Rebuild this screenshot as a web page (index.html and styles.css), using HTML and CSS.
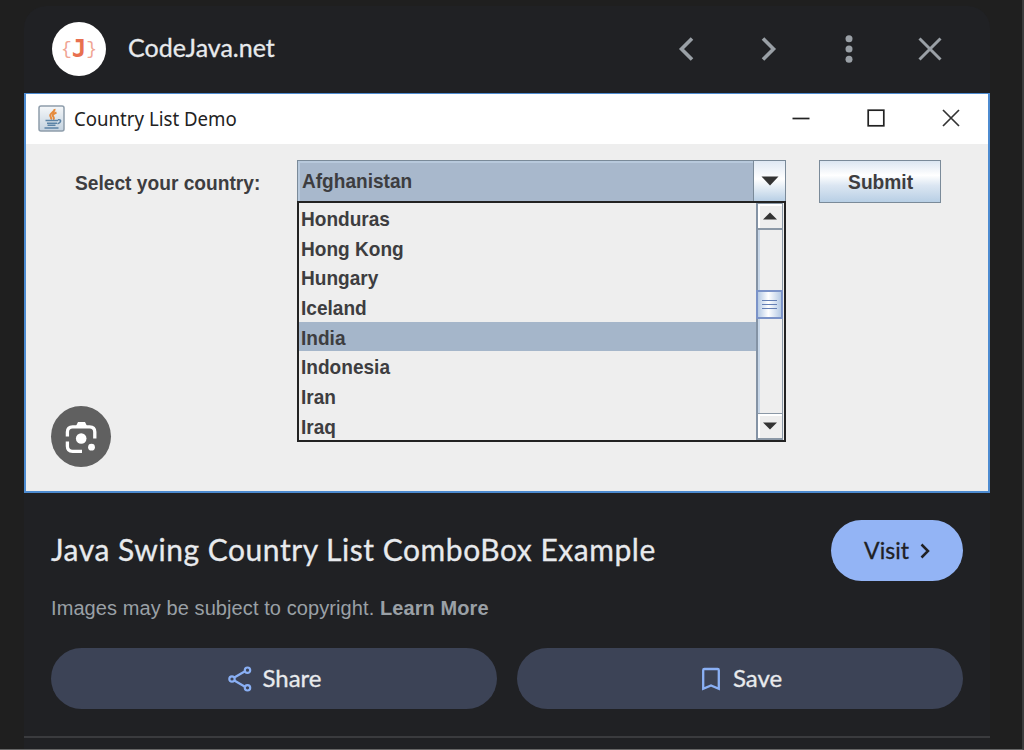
FILE: index.html
```html
<!DOCTYPE html>
<html lang="en">
<head>
<meta charset="utf-8">
<title>Java Swing Country List ComboBox Example</title>
<link rel="stylesheet" href="styles.css">
</head>
<body>
<main class="panel">
  <header class="panel-head">
    <span class="logo"><span class="brace">{</span><b>J</b><span class="brace">}</span></span>
    <span class="site"><span class="t-site">CodeJava.net</span></span>
    <nav class="actions">
      <svg width="28" height="28" viewBox="0 0 28 28"><path d="M19 3.500 8.500 14 19 24.500" fill="none" stroke="#9aa0a6" stroke-width="3.600"/></svg>
      <svg width="28" height="28" viewBox="0 0 28 28"><path d="M9 3.500 19.500 14 9 24.500" fill="none" stroke="#9aa0a6" stroke-width="3.600"/></svg>
      <svg width="28" height="28" viewBox="0 0 28 28" fill="#9aa0a6"><circle cx="14" cy="3.800" r="3.500"/><circle cx="14" cy="14" r="3.500"/><circle cx="14" cy="24.200" r="3.500"/></svg>
      <svg width="28" height="28" viewBox="0 0 28 28"><path d="M3.500 3.500 24.500 24.500M24.500 3.500 3.500 24.500" fill="none" stroke="#9aa0a6" stroke-width="3"/></svg>
    </nav>
  </header>

  <section class="window">
    <div class="titlebar">
      <svg class="java" width="27" height="27" viewBox="0 0 27 27">
        <defs><linearGradient id="cup" x2="0" y2="1"><stop stop-color="#f5f7f9"/><stop offset="1" stop-color="#c3d2df"/></linearGradient></defs>
        <rect x="1" y="1" width="25" height="25" rx="2" fill="url(#cup)" stroke="#8e9dab" stroke-width="1.500"/>
        <path d="M16.500 4c1 3-6 4.500-4 7.500 1 1.500 1 2 .5 3M18.500 7.500c-4 1.500-4.500 3-3 4.500.8 1 .3 2-.5 2.500" fill="none" stroke="#e58a3c" stroke-width="2"/>
        <path d="M7.500 15.500h12.500M9 18.300h10M9.500 20.300h8M6.500 23h14M20 14.800c3.500-.8 3.500 2.800-.5 4" fill="none" stroke="#5b83a6" stroke-width="1.600"/>
      </svg>
      <span class="win-title"><span class="t-win">Country List Demo</span></span>
      <div class="win-buttons">
        <svg width="18" height="18" viewBox="0 0 18 18"><path d="M.5 9.500h17" stroke="#222" stroke-width="1.700"/></svg>
        <svg width="18" height="18" viewBox="0 0 18 18"><rect x="1.200" y="1.200" width="15.600" height="15.600" fill="none" stroke="#222" stroke-width="1.700"/></svg>
        <svg width="18" height="18" viewBox="0 0 18 18"><path d="M1 1l16 16M17 1 1 17" stroke="#333" stroke-width="1.700"/></svg>
      </div>
    </div>
    <div class="form">
      <label class="label"><span class="t-label">Select your country:</span></label>
      <div class="combo">
        <div class="combo-box">
          <div class="combo-value"><span class="t-item">Afghanistan</span></div>
          <div class="combo-arrow"><svg width="18" height="10" viewBox="0 0 18 10"><path d="M.5.500h17L9 9.500z" fill="#333"/></svg></div>
        </div>
        <div class="popup">
          <ul class="list">
            <li><span class="t-item">Honduras</span></li>
            <li><span class="t-item">Hong Kong</span></li>
            <li><span class="t-item">Hungary</span></li>
            <li><span class="t-item">Iceland</span></li>
            <li class="selected"><span class="t-item">India</span></li>
            <li><span class="t-item">Indonesia</span></li>
            <li><span class="t-item">Iran</span></li>
            <li><span class="t-item">Iraq</span></li>
          </ul>
          <div class="scroll">
            <div class="sb-btn up"><svg width="14" height="8" viewBox="0 0 14 8"><path d="M0 7.500h14L7 .5z" fill="#333"/></svg></div>
            <div class="track"><div class="thumb"><i></i><i></i><i></i></div></div>
            <div class="sb-btn down"><svg width="14" height="8" viewBox="0 0 14 8"><path d="M0 .5h14L7 7.500z" fill="#333"/></svg></div>
          </div>
        </div>
      </div>
      <button class="submit"><span class="t-submit">Submit</span></button>
    </div>
    <div class="lens">
      <svg width="32" height="32" viewBox="0 0 32 32"><g fill="none" stroke="#fff" stroke-width="3.300"><path d="M2.400 15.500V11q0-5.200 5.200-5.200h17Q29.800 5.800 29.800 11v6.500"/><path d="M2.400 20.500v4.800q0 5 5.200 5H17"/></g><path d="M11 5l2-4h7l2 4z" fill="#fff"/><circle cx="16.200" cy="17.500" r="5.300" fill="#fff"/><circle cx="26.500" cy="26.200" r="3.400" fill="#fff"/></svg>
    </div>
  </section>

  <div class="title-row">
    <h1><span class="t-title">Java Swing Country List ComboBox Example</span></h1>
    <a class="visit"><span class="t-visit">Visit</span><svg width="10" height="16" viewBox="0 0 10 16"><path d="M1.500 1.500 8 8l-6.500 6.500" fill="none" stroke="#202124" stroke-width="2.500"/></svg></a>
  </div>
  <p class="notice"><span class="t-note">Images may be subject to copyright. <b>Learn More</b></span></p>
  <div class="buttons">
    <a class="pill"><svg width="24" height="26" viewBox="0 0 24 26"><g fill="none" stroke="#8ab0f5" stroke-width="2.200"><path d="M6.300 11.500 17 5.200M6.300 14.500 17 20.800"/><circle cx="4" cy="13" r="2.700"/><circle cx="19.500" cy="4.200" r="2.700"/><circle cx="19.500" cy="21.800" r="2.700"/></g></svg><span class="t-share">Share</span></a>
    <a class="pill save"><svg width="20" height="24" viewBox="0 0 20 24"><path d="M2.200 21.800V3.200Q2.200 2 3.400 2h13.200q1.200 0 1.200 1.200v18.600L10 18.400z" fill="none" stroke="#8ab0f5" stroke-width="2.300"/></svg><span class="t-save">Save</span></a>
  </div>
</main>
</body>
</html>
```
FILE: styles.css
```css
* { box-sizing: border-box; }
body {
  margin: 0;
  height: 750px;
  overflow: hidden;
  padding: 6px 32px 0 24px;
  background: #1f1f1f;
  border-right: 2px solid #3b3b3b;
  border-bottom: 1px solid #666;
  font-family: Lato, "Open Sans", sans-serif;
}
.panel {
  width: 966px;
  height: 744px;
  background: #202124;
  border-radius: 22px 22px 0 0;
}
.panel-head {
  height: 87px;
  display: flex;
  align-items: center;
  padding: 0 46px 2px 28px;
}
.logo {
  width: 54px;
  height: 54px;
  border-radius: 50%;
  background: #fff;
  display: flex;
  align-items: center;
  justify-content: center;
  color: #e8704f;
}
.logo b { font: bold 24px/1 "DejaVu Sans Mono", monospace; }
.brace { font: 18px/1 "Liberation Mono", monospace; color: #f0a493; }
.site { margin-left: 22px; padding-bottom: 4px; font-size: 25px; color: #e8eaed; }
.actions { margin-left: auto; display: flex; gap: 53px; }
.actions svg, .pill svg, .visit svg { display: block; flex: none; }

[class^="t-"] { display: inline-block; white-space: nowrap; transform-origin: 0 50%; }
.t-site, .t-title, .t-share, .t-save, .t-visit { -webkit-text-stroke: 0.300px currentColor; }
.t-title { letter-spacing: 0.530px; }
.t-share, .t-save, .t-visit { padding-bottom: 2px; }
.t-win { transform: scaleX(0.932); }
.t-label { font-size: 21px; transform: scaleX(0.913); }
.t-item { font-size: 20.500px; transform: scaleX(0.930); }
.t-submit { font-size: 21px; transform: scaleX(0.913); transform-origin: 50% 50%; }
.t-note { letter-spacing: 0.090px; }

.window {
  position: relative;
  height: 400px;
  border: 2px solid #4d8bd0;
  border-width: 1.500px 2px 2px;
  background: #eee;
  font-family: "Liberation Sans", Arial, sans-serif;
  color: #3d3d40;
}
.titlebar {
  height: 50px;
  background: #fff;
  display: flex;
  align-items: center;
  padding: 0 28px 2px 12px;
}
.win-title { font: 20px/28px "Noto Sans", sans-serif; margin: 2px 0 0 9px; color: #222; }
.win-buttons { margin-left: auto; display: flex; gap: 57px; }
.win-buttons svg { display: block; }
.form {
  display: grid;
  grid-template-columns: 222px 489px 122px;
  column-gap: 0;
  padding: 16px 0 0 49px;
  font-weight: bold;
  font-size: 20px;
}
.label { line-height: 45px; }
.combo { position: relative; height: 42px; }
.combo-box {
  height: 42px;
  display: flex;
  border: 1.500px solid #7a8a99;
  background: #a8b8cc;
}
.combo-value { flex: 1; line-height: 40px; padding-left: 4px; box-shadow: inset 2px 2px #b8c9dc; }
.combo-arrow {
  width: 32px;
  border-left: 1px solid #7a8a99;
  background: linear-gradient(#dfe8f3, #fff 45%, #b8cfe5);
  display: flex;
  align-items: center;
  justify-content: center;
}
.popup {
  position: absolute;
  top: 41px;
  left: 0;
  width: 489px;
  height: 241px;
  border: 2px solid #222;
  background: #eee;
  display: flex;
}
.list { flex: 1; list-style: none; margin: 0; padding: 0; }
.list li { height: 29.700px; line-height: 31px; padding-left: 2px; }
.list .selected { background: #a5b6ca; }
.scroll {
  width: 27px;
  margin-right: 1px;
  border-left: 2px solid #8493a5;
  border-right: 1px solid #8b98a6;
  display: flex;
  flex-direction: column;
}
.sb-btn {
  height: 27px;
  display: flex;
  align-items: center;
  justify-content: center;
  border: 1px solid #8b98a6;
  border-width: 1px 0 2px;
  box-shadow: inset 2px 2px #fff;
}
.track { flex: 1; padding-top: 60px; border-left: 2px solid #c8d7e8; }
.thumb {
  height: 29px;
  margin: 0 -1px 0 -4px;
  border: 2px solid #7b93c8;
  background: linear-gradient(90deg, #b5cae5, #fff 45%, #b5cae5);
  display: flex;
  flex-direction: column;
  align-items: center;
  justify-content: center;
  gap: 3px;
}
.thumb i { width: 15px; height: 1px; background: #6580b5; }
.submit {
  width: 122px;
  height: 43px;
  margin-left: 33px;
  padding: 0 0 0 1px;
  border: 1.500px solid #7a8a99;
  background: linear-gradient(#dce6f1, #fff 35%, #dbe6f2 60%, #b8cfe5);
  font: bold 20px/40px "Liberation Sans", Arial, sans-serif;
  color: #3d3d40;
}
.lens {
  position: absolute;
  left: 25px;
  bottom: 24px;
  width: 60px;
  height: 61px;
  border-radius: 50%;
  background: #606060;
  display: flex;
  align-items: center;
  justify-content: center;
}
.title-row {
  height: 61px;
  margin: 27px 27px 0;
  display: flex;
  align-items: center;
  justify-content: space-between;
}
h1 { margin: 0; padding-bottom: 3px; font-size: 30px; font-weight: 400; color: #e8eaed; }
.visit {
  width: 132px;
  height: 61px;
  border-radius: 31px;
  background: #93b4f5;
  color: #202124;
  font-size: 23px;
  display: flex;
  align-items: center;
  justify-content: center;
  gap: 11px;
}
.notice {
  margin: 12px 27px 0;
  font: 20px/30px "Liberation Sans", Arial, sans-serif;
  color: #9aa0a6;
}
.buttons {
  margin: 25px 27px 0;
  display: grid;
  grid-template-columns: 1fr 1fr;
  gap: 20px;
  padding-bottom: 29px;
  position: relative;
}
.pill {
  height: 61px;
  border-radius: 31px;
  background: #3c4356;
  color: #e8eaed;
  font-size: 24px;
  display: flex;
  align-items: center;
  justify-content: center;
  gap: 10px;
  padding-left: 2px;
}
.save { gap: 12px; padding-left: 3px; }
.buttons::after {
  content: "";
  position: absolute;
  left: -27px;
  right: -27px;
  bottom: 0;
  border-top: 2px solid #3a3b3e;
}
```
